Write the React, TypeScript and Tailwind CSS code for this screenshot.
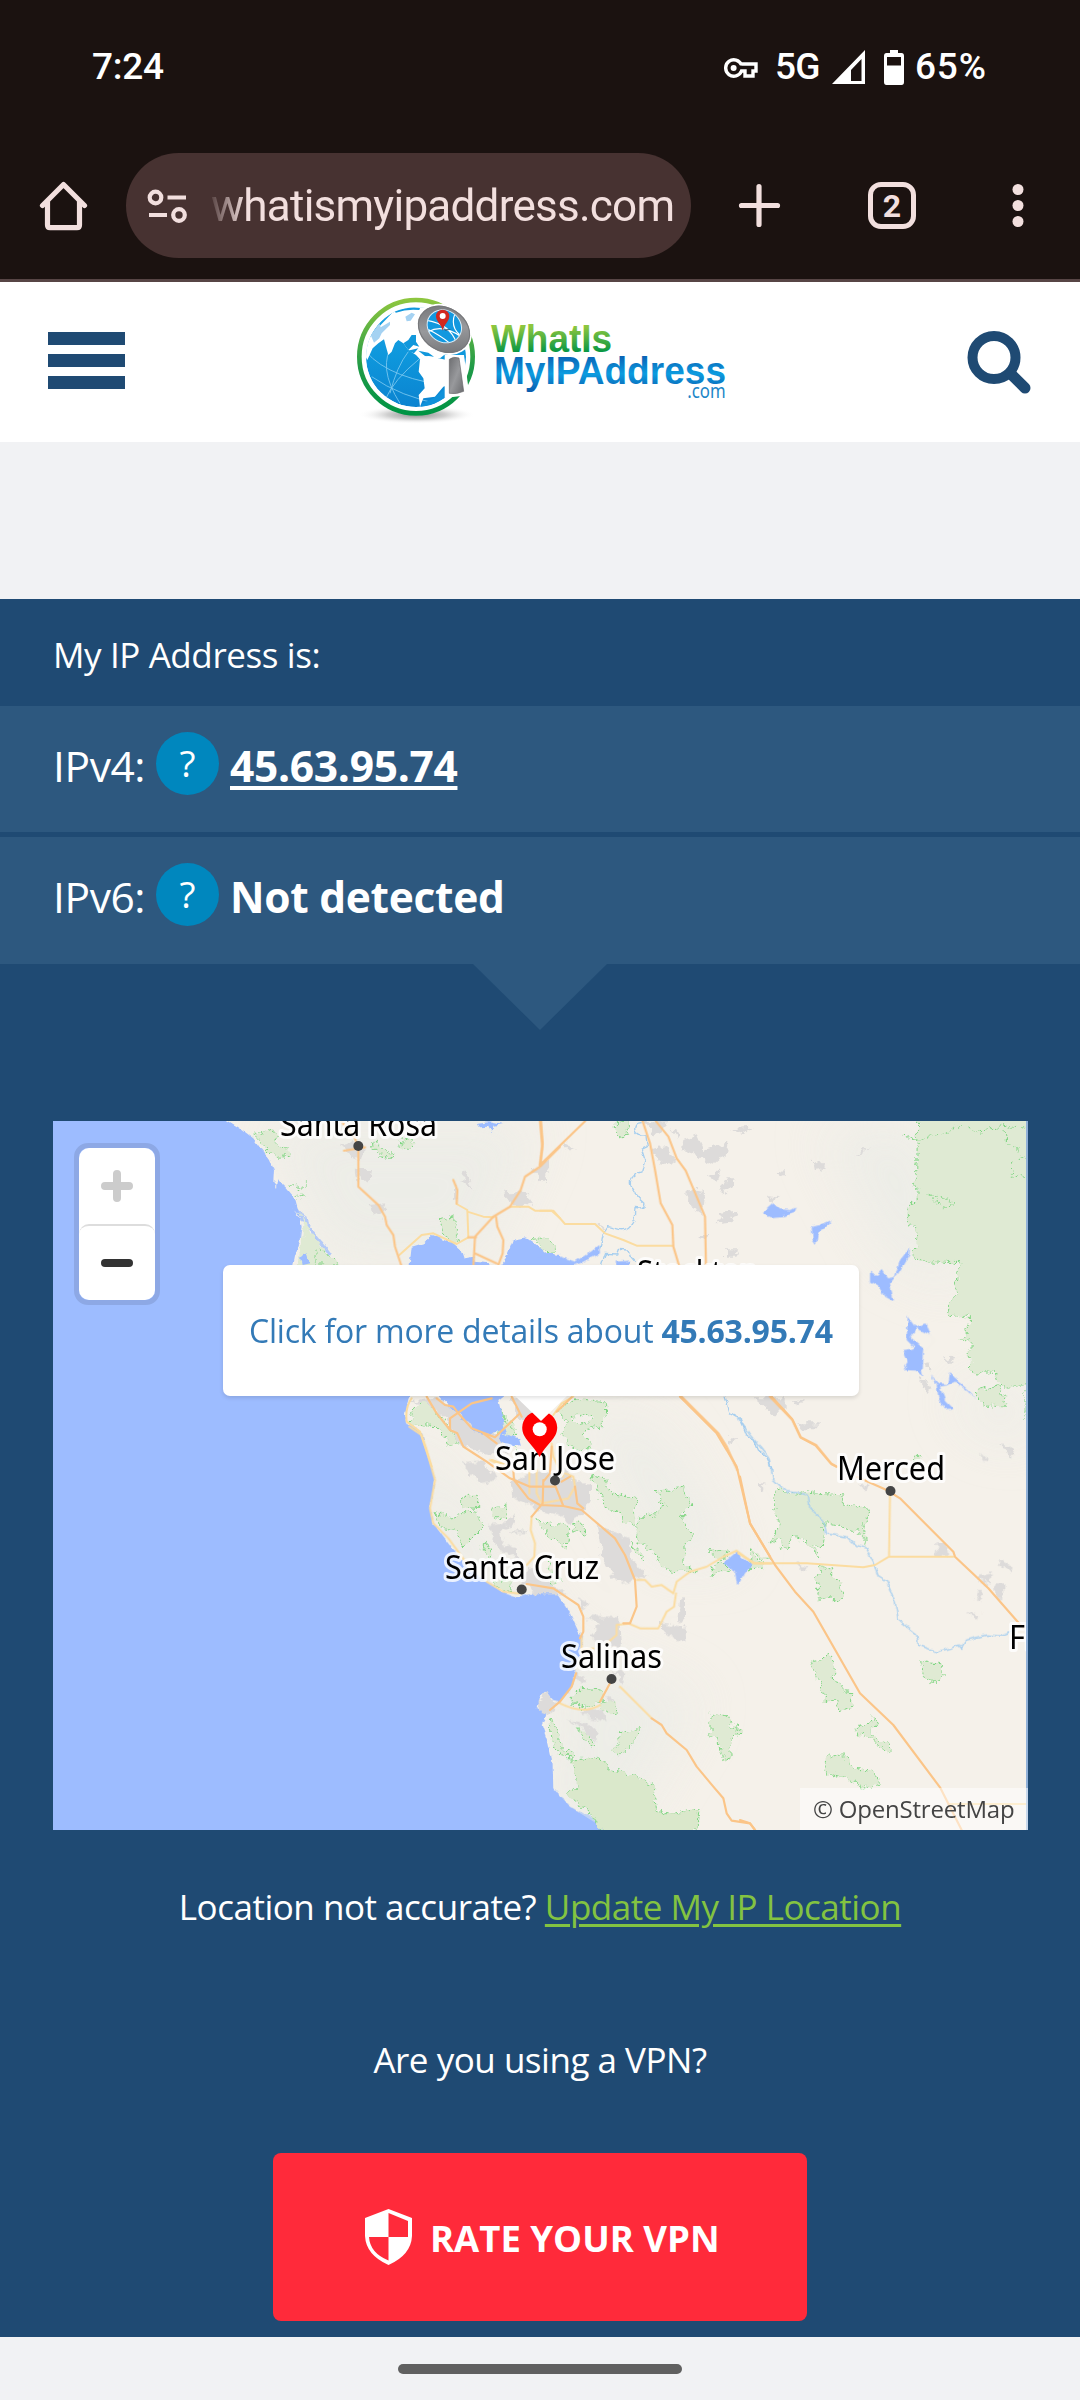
import React from "react";

function StatusBar() {
  return (
    <div className="flex h-[134px] items-center pl-[92px] font-['Roboto'] text-[37px] font-medium text-white">
      <span className="w-[632px] tracking-[-0.3px]">7:24</span>
      <svg className="mt-[1px] shrink-0" width="34" height="20" viewBox="0 0 34 20" fill="none" stroke="#fff" strokeWidth="3.4">
        <path d="M17.500 7A8.200 8.200 0 1 0 17.500 13H21V18H29V13H32V6H17.500Z" />
        <circle cx="9.600" cy="10" r="3" fill="#fff" stroke="none" />
      </svg>
      <span className="ml-[17px] w-[57px] tracking-[-0.8px]">5G</span>
      <svg className="shrink-0" width="33" height="34" viewBox="0 0 33 34">
        <path fill="#fff" fillRule="evenodd" d="M33 0V34H0ZM29.500 9L19 20V31H29.500Z" />
      </svg>
      <svg className="ml-[19px] shrink-0" width="20" height="35" viewBox="0 0 20 35">
        <path fill="#fff" fillRule="evenodd" d="M6 0H14V3H17.500Q20 3 20 6V32Q20 35 17.500 35H2.500Q0 35 0 32V6Q0 3 2.500 3H6ZM3 7V15.500H17V7Z" />
      </svg>
      <span className="ml-[11px] tracking-[0.8px]">65%</span>
    </div>
  );
}

function BrowserBar() {
  return (
    <div className="flex h-[148px] items-start border-b-[3px] border-[#574545] pt-[19px]">
      <svg className="ml-[39px] mt-[28px] shrink-0" width="49" height="51" viewBox="0 0 49 51" fill="none" stroke="#f2dfde" strokeWidth="5.200" strokeLinecap="round" strokeLinejoin="round">
        <path d="M3.500 24.500L24.500 3.500L45.500 24.500M8.500 20V44Q8.500 46.700 11 46.700H38Q40.500 46.700 40.500 44V20" />
      </svg>
      <div className="ml-[38px] flex h-[105px] w-[565px] shrink-0 items-center rounded-full bg-[#473231]">
        <svg className="ml-[21px] shrink-0" width="40" height="36" viewBox="0 0 40 36" fill="none" stroke="#f2dfde" strokeWidth="4.200">
          <circle cx="8.500" cy="9.500" r="5.800" />
          <circle cx="32" cy="27" r="5.800" />
          <path d="M20.500 9.500H39M2 27H20" />
        </svg>
        <div className="ml-[24px] whitespace-nowrap font-['Roboto'] text-[44px] leading-[60px] tracking-[-0.750px] text-[#f2dfde] [mask-image:linear-gradient(to_right,rgba(0,0,0,0.1),black_34px)]">
          whatismyipaddress.com
        </div>
      </div>
      <svg className="ml-[46px] mt-[29px] shrink-0" width="44" height="46" viewBox="0 0 44 46" stroke="#f2dfde" strokeWidth="5.200" strokeLinecap="round">
        <path d="M22 4.500V42.500M4.500 23.500H40.500" />
      </svg>
      <div className="ml-[87px] mt-[29px] flex h-[47px] w-[48px] shrink-0 items-center justify-center rounded-[13px] border-[5px] border-[#f2dfde] font-['Roboto'] text-[32px] font-bold leading-none text-[#f2dfde]">
        2
      </div>
      <svg className="ml-[96px] mt-[29px] shrink-0" width="12" height="46" viewBox="0 0 12 46" fill="#f2dfde">
        <circle cx="6" cy="7.500" r="5.500" />
        <circle cx="6" cy="23.500" r="5.500" />
        <circle cx="6" cy="39.500" r="5.500" />
      </svg>
    </div>
  );
}

function Logo() {
  return (
    <svg width="400" height="150" viewBox="0 15 1200 450">
      <defs>
        <linearGradient id="ring" x1="0" y1="0" x2="0" y2="1">
          <stop offset="0" stopColor="#8dc63f" />
          <stop offset="0.6" stopColor="#1f9a48" />
          <stop offset="1" stopColor="#009444" />
        </linearGradient>
        <linearGradient id="ocean" x1="0" y1="0" x2="0" y2="1">
          <stop offset="0" stopColor="#1ea4e4" />
          <stop offset="0.5" stopColor="#0e97dc" />
          <stop offset="1" stopColor="#0b83d0" />
        </linearGradient>
        <linearGradient id="steel" x1="0" y1="0" x2="1" y2="1">
          <stop offset="0" stopColor="#6d6e71" />
          <stop offset="0.5" stopColor="#98999c" />
          <stop offset="1" stopColor="#6a6b6e" />
        </linearGradient>
        <linearGradient id="greenText" gradientUnits="userSpaceOnUse" x1="0" y1="132" x2="0" y2="220">
          <stop offset="0.1" stopColor="#8dc63f" />
          <stop offset="1" stopColor="#009444" />
        </linearGradient>
        <linearGradient id="blueText" gradientUnits="userSpaceOnUse" x1="0" y1="228" x2="0" y2="335">
          <stop offset="0" stopColor="#0a62b4" />
          <stop offset="0.5" stopColor="#0c9ce0" />
          <stop offset="1" stopColor="#0a5cae" />
        </linearGradient>
        <radialGradient id="shade">
          <stop offset="0" stopColor="#8f8f8f" />
          <stop offset="0.5" stopColor="#cfcfcf" />
          <stop offset="1" stopColor="#fff" stopOpacity="0" />
        </radialGradient>
        <clipPath id="sphere"><circle cx="228" cy="231" r="150" /></clipPath>
        <clipPath id="lens"><ellipse cx="313" cy="139" rx="52" ry="46" transform="rotate(35 313 139)" /></clipPath>
      </defs>
      <ellipse cx="230" cy="404" rx="175" ry="28" fill="url(#shade)" />
      <circle cx="228" cy="230" r="176" fill="#fff" />
      <circle cx="228" cy="230" r="170" fill="none" stroke="url(#ring)" strokeWidth="14" />
      <g clipPath="url(#sphere)">
        <circle cx="228" cy="231" r="150" fill="url(#ocean)" />
        <g fill="none" stroke="#7fcaf0" strokeWidth="2.500">
          <path d="M78 215Q150 300 350 320M95 290Q180 350 310 375M160 190Q110 260 180 370M240 235Q160 300 135 360M205 215Q170 260 150 340" />
        </g>
        <path fill="#fff" d="M60 200L92 170L122 135L160 95L230 75L330 80L370 180L300 235L260 235L240 238L228 225L205 210L190 190L175 180L165 190L155 215L145 225L138 200L132 178L115 190L98 205L82 240Z" />
        <path fill="#1198dc" d="M190 190L205 180L215 165L228 165L228 185L238 200L220 195L205 210ZM203 212L235 205L222 220ZM235 212L265 218L282 230L255 228Z" />
        <path fill="#fff" d="M240 238L265 228L320 240L340 310L310 320L285 350L250 355L240 380L236 345L254 325L250 295L236 275Z" />
        <path fill="#1198dc" d="M162 94Q210 78 240 84L238 90Q200 86 168 98Z" />
        <path fill="#a5d2f2" d="M196 110L215 98L225 103L212 122L200 124ZM92 165L118 130L122 142L150 125L150 135L125 160L118 175L102 188Z" />
        <path fill="#1092da" d="M245 372L285 352L312 328L330 350L290 385L240 395Z" />
      </g>
      <path fill="#fff" d="M314 225H372L388 345L314 354Z" />
      <ellipse cx="312" cy="148" rx="88" ry="72" transform="rotate(32 312 148)" fill="#fff" />
      <ellipse cx="312" cy="148" rx="83" ry="66" transform="rotate(32 312 148)" fill="url(#steel)" />
      <ellipse cx="312" cy="148" rx="81" ry="64" transform="rotate(32 312 148)" fill="none" stroke="#77787b" strokeWidth="3" />
      <ellipse cx="313" cy="139" rx="55" ry="49" transform="rotate(35 313 139)" fill="#d8ecf8" />
      <g clipPath="url(#lens)">
        <rect x="250" y="80" width="130" height="120" fill="#1298df" />
        <path d="M255 120Q330 130 350 190M265 155Q310 130 370 175M345 100Q330 140 360 165M258 145Q300 165 330 190" fill="none" stroke="#fff" strokeWidth="3.500" />
      </g>
      <path d="M308 148H335L318 152Z" fill="#28506c" />
      <path d="M308 152C304 132 288 125 288 109A20 20 0 0 1 328 109C328 125 312 132 308 152Z" fill="#d2281f" />
      <circle cx="308" cy="108" r="9" fill="#fff" />
      <path fill="url(#steel)" stroke="#66676a" strokeWidth="2" d="M328 238Q340 228 357 234L371 334Q350 344 328 340Z" />
      <g fontFamily="Liberation Sans" fontWeight="bold" strokeLinejoin="round">
        <text x="453" y="216" fontSize="118" textLength="363" lengthAdjust="spacingAndGlyphs" fill="url(#greenText)">WhatIs</text>
        <text x="462" y="311" fontSize="116" textLength="696" lengthAdjust="spacingAndGlyphs" fill="url(#blueText)">MyIPAddress</text>
      </g>
      <text x="1042" y="354" fontSize="58" fontFamily="Noto Sans" textLength="115" lengthAdjust="spacingAndGlyphs" fill="#1b86c8">.com</text>
    </svg>
  );
}

function SiteHeader() {
  return (
    <header className="flex h-[160px] bg-white">
      <div className="ml-[48px] mt-[50px] flex w-[77px] flex-col gap-[9px]">
        <div className="h-[13px] bg-[#1f4a73]" />
        <div className="h-[13px] bg-[#1f4a73]" />
        <div className="h-[13px] bg-[#1f4a73]" />
      </div>
      <div className="ml-[215px] mt-[3px]">
        <Logo />
      </div>
      <svg className="ml-[227px] mt-[48px]" width="66" height="66" viewBox="0 0 66 66" fill="none" stroke="#1f4a73" strokeLinecap="round">
        <circle cx="27" cy="27.500" r="21.500" strokeWidth="10" />
        <path d="M44 44L58 58" strokeWidth="11" />
      </svg>
    </header>
  );
}

function IpRow({ label, children }: { label: string; children: React.ReactNode }) {
  return (
    <div className="flex h-[126px] items-center bg-[#2d587f] pb-[6px] pl-[53px] text-[42.500px] leading-[60px] text-white">
      <span className="w-[103px] tracking-[-0.400px]">{label}</span>
      <span className="mb-[6px] flex h-[63px] w-[63px] items-center justify-center rounded-full bg-[#0087be] text-[37px]">?</span>
      <span className="ml-[11px] font-bold tracking-[-0.300px]">{children}</span>
    </div>
  );
}

const CITIES = [
  { name: "Santa Rosa", x: 280, y: 1136, w: 157, dot: [358.300, 1146] },
  { name: "Stockton", x: 637, y: 1284, w: 121, dot: null },
  { name: "San Jose", x: 495, y: 1470, w: 120, dot: [555, 1480.500] },
  { name: "Santa Cruz", x: 445, y: 1579, w: 154, dot: [521.700, 1589.500] },
  { name: "Salinas", x: 561, y: 1668, w: 101, dot: [611.500, 1679] },
  { name: "Merced", x: 837, y: 1480, w: 108, dot: [890.500, 1491] },
  { name: "Fresno", x: 1009, y: 1649, w: 98, dot: null },
];

const NW = "translate(40 1110) scale(.33333)";
const NE = "translate(540 1110) scale(.33333)";
const SW = "translate(370 1380) scale(.33333)";
const SE = "translate(740 1380) scale(.33333)";

function MapTiles() {
  return (
    <svg className="block" width="975" height="709" viewBox="53 1121 975 709">
      <defs>
        <filter id="rough" filterUnits="userSpaceOnUse" x="40" y="1110" width="1000" height="730">
          <feTurbulence type="fractalNoise" baseFrequency="0.12" numOctaves="3" seed="4" result="n" />
          <feDisplacementMap in="SourceGraphic" in2="n" scale="11" xChannelSelector="R" yChannelSelector="G" />
        </filter>
        <filter id="coast" filterUnits="userSpaceOnUse" x="40" y="1110" width="1000" height="730">
          <feTurbulence type="fractalNoise" baseFrequency="0.15" numOctaves="2" seed="9" result="n" />
          <feDisplacementMap in="SourceGraphic" in2="n" scale="5" xChannelSelector="R" yChannelSelector="G" />
        </filter>
        <filter id="soft" filterUnits="userSpaceOnUse" x="40" y="1110" width="1000" height="730">
          <feGaussianBlur stdDeviation="26" />
        </filter>
        <clipPath id="landClip">
          <path transform={NW} d="M560 30L600 55L640 85L665 120L690 150L702 180L712 208L740 235L765 265L775 300L785 350L760 480H3000V0H560Z" />
          <path transform={SW} d="M125 40L105 100L108 130L155 155L170 210L195 300L180 385L190 430L235 490L290 560L350 605L400 635L440 650L495 640L525 622L560 640L600 700L628 760L632 830L605 925L545 990L525 1035L548 1150L550 1225L600 1280L710 1350H2000V40Z" />
          <path d="M600 1250H1040V1410H600Z" />
        </clipPath>
      </defs>
      <rect x="53" y="1121" width="975" height="709" fill="#9dbcff" />
      <g fill="#f5f1ea" filter="url(#coast)">
        <path transform={NW} d="M560 0V30L600 55L640 85L665 120L690 150L702 180L700 215L708 235L712 208L740 235L765 265L775 300L785 310L800 320L803 340L835 380L875 430L870 437L845 415L805 355L780 320L757 295L780 325L785 350L778 400L765 440L757 480H3200V0Z" />
        <path transform={SW} d="M125 40L105 100L108 130L155 155L170 210L195 300L180 385L190 430L235 490L290 560L350 605L400 635L440 650L495 640L525 622L560 640L600 700L628 760L640 765L632 800L630 830L615 880L605 925L570 965L550 960L525 933L505 965L500 985L530 995L525 1015L515 1035L535 1090L548 1150L550 1225L600 1280L660 1310L710 1350L730 1390H2200V40Z" />
        <path d="M600 1264H1060V1400H600Z" />
      </g>
      <g clipPath="url(#landClip)">
        <g fill="#e9ebe6" filter="url(#soft)" opacity=".7">
          <path d="M260 1121H540L480 1260H330Z" />
          <path d="M820 1130L920 1121L970 1290L890 1260Z" />
          <path d="M400 1420L470 1500L560 1640L700 1700L620 1830H540L560 1700L420 1540Z" />
          <path d="M570 1400L660 1430L740 1560L660 1560Z" />
          <path d="M950 1390H1030V1440L980 1430Z" />
        </g>
      </g>

      <g filter="url(#rough)">
        <g transform={NE} fill="#dfead3" stroke="#7dd581" strokeWidth="3" strokeDasharray="9 6">
          <path d="M1133 20H1500V828L1383 828L1370 790L1292 788L1290 690L1262 688L1285 660V615L1225 620L1222 585L1248 560L1250 490L1270 458L1133 455L1115 435L1130 410V348H1105V285L1132 280L1130 225L1115 222L1130 190Z" />
          <path fill="none" d="M1085 82L1150 88L1220 70L1270 42L1310 70L1380 48L1460 55M1395 60L1400 100L1430 110L1435 150L1460 140M1418 155L1417 205L1450 200M1172 250L1205 265L1245 272L1215 298L1175 262" />
          <path d="M1305 845L1370 825L1400 875L1390 890L1330 888Z" />
          <path fill="none" d="M1455 820V935" />
          <path d="M232 34H262V77H232ZM-5 385L45 400V430L5 422Z" />
          <path d="M50 900L110 865L200 880V900L185 950L130 960L155 1000L150 1020L95 1015L65 965L80 940ZM95 920L150 910L160 925L120 945Z" fillRule="evenodd" />
        </g>
        <g transform={NW} fill="#dfead3" stroke="#7dd581" strokeWidth="3" strokeDasharray="9 6">
          <path d="M645 75L685 55L710 70L700 90L745 120L750 135L720 145L680 120Z" />
          <path d="M1000 95L1050 125L1055 145L1025 142L1003 120ZM1080 95L1110 85L1125 100L1105 118L1080 112Z" />
          <path d="M750 232L798 222L770 240L795 262L770 265" fill="none" />
          <path stroke="none" d="M778 305L800 345L840 400L895 462V480H768L785 400L790 350Z" />
          <path d="M825 415L860 425L895 465H825Z" />
          <path d="M1205 325L1245 318L1245 360L1262 390L1240 402L1202 365ZM1475 380L1520 382L1548 405L1540 430L1510 425Z" />
          <path d="M1115 900L1155 870L1200 920L1240 970L1255 1005H1225L1195 950L1110 945ZM1380 905L1430 955L1410 960Z" />
        </g>
        <g transform={SW} fill="#dfead3" stroke="#7dd581" strokeWidth="3" strokeDasharray="9 6">
          <path d="M390 90L410 130L440 160L420 180L450 215L390 160Z" />
          <path d="M275 360L300 345L320 350V385L275 382ZM365 385L405 378L410 420L375 415ZM195 398L250 415L285 400L320 395L340 440L280 500L260 450L210 440ZM340 490L365 505L360 535L340 520Z" />
          <path d="M500 425L565 435L600 440L590 510L560 480L510 440ZM610 430L645 435L648 470L615 455Z" />
          <path d="M665 285L710 300L720 340L800 355L795 435L760 425L745 390L705 385L680 320Z" />
          <path d="M855 335L940 325L960 375L935 400L950 450L970 460L945 500L945 550L980 575L885 570L860 525L810 490L800 440L820 405L870 400L885 370Z" />
          <path d="M785 490L810 515L830 540L795 520ZM1018 512H1075L1055 545L1080 570L1020 585L1045 545ZM1140 505L1180 540L1200 535" />
          <path d="M605 950L640 925L695 930L700 960L650 985L610 978ZM700 965L740 970L735 1000L695 985Z" />
          <path d="M535 1020L555 1030L570 1080L575 1110L610 1125V1135L570 1130L548 1085ZM620 1045L655 1060L675 1100L655 1095ZM745 1055L805 1045L800 1080L745 1130L725 1115L748 1085Z" />
          <path fill="#dae8cb" d="M605 1140L690 1135L720 1165L790 1185L850 1220L860 1295H990L985 1325L970 1370H700L670 1310L590 1240L625 1220Z" />
          <path d="M1020 1010L1040 998L1075 1010L1085 1035L1118 1050L1080 1085L1080 1130L1060 1135L1045 1075L1020 1060Z" />
          <path d="M375 605L430 600L420 635L395 625ZM535 545L545 610L575 600" />
        </g>
        <g transform={SE} fill="#dfead3" stroke="#7dd581" strokeWidth="3" strokeDasharray="9 6">
          <path d="M115 320L150 345L190 335L240 340L310 345V375L385 385V420L370 440L380 490L350 450L300 440L255 430L250 500L225 490L240 540L210 490L150 470L145 510L125 500L120 475L90 490L115 440L100 360Z" />
          <path d="M245 560L275 565L275 590L308 605L303 663L235 650L228 590ZM35 505L50 540L70 545L65 560L30 570Z" />
          <path d="M208 850L235 845L260 825L280 840L285 890L310 930L335 940V985L300 998L285 965L255 960L240 910Z" />
          <path d="M352 1040L385 1030L400 1012L415 1030L395 1060L455 1110L440 1118L395 1075L352 1062ZM545 842L612 858V890L580 908L550 890ZM260 1125L320 1132L345 1165L400 1175L418 1208L390 1230L330 1200L258 1180ZM518 230L540 225L545 245H518ZM-10 1040L8 1050L0 1075Z" />
        </g>
        <g transform={NE} fill="#dddbda">
          <path d="M310 34H385L345 80ZM340 120L385 108L405 140L400 165L360 160ZM430 90L470 75L490 120L565 95L560 140L500 165L470 135L425 120ZM570 55L635 50L610 70ZM500 200L545 178L530 215ZM540 245L560 205L590 205L580 230ZM440 240L495 245L490 310L460 290L438 280ZM530 340L550 310L590 305L570 335ZM815 145L855 160L850 192L822 180ZM950 138L980 112L975 130ZM555 418H595L580 440H555ZM470 375L510 375L495 385ZM70 95L110 115L75 115ZM390 55L420 70L415 85ZM685 258L718 262L700 272ZM710 190L735 180L730 200ZM640 862H740V890L710 925L685 900ZM760 870L790 875L760 895ZM775 940H830V955H780ZM1135 805L1175 825L1165 850ZM1150 765L1175 760L1170 775ZM1215 735L1245 755H1225ZM565 985L585 990L575 1005ZM1385 1000L1420 1020L1410 1040ZM160 335L185 345L200 362Z" />
          <path d="M0 150L25 160L0 215Z" />
        </g>
        <g transform={NW} fill="#dddbda">
          <path d="M900 105L940 95L975 110L965 150L930 135ZM950 180L990 180L985 215L955 215ZM990 285L1045 280L1020 320L995 305ZM1245 215L1255 260L1245 270ZM1275 180L1290 210L1300 245L1265 215ZM1395 245L1465 250L1480 290L1410 285ZM1480 185L1530 150L1515 220Z" />
          <path d="M1105 875L1160 865L1200 865L1290 925L1380 975L1400 1030L1350 1030L1260 1010L1220 930L1160 880ZM1410 865L1440 860L1500 920V980L1440 930Z" />
        </g>
        <g transform={SW} fill="#dddbda">
          <path d="M270 250L340 245L380 300L330 310L290 265ZM425 300L480 280L600 270L620 310H660V360L640 400L600 430L560 400L510 390L430 355ZM355 435L410 430L435 400L430 430L390 455L405 495L440 505L450 540L390 510ZM420 455H470V460H420ZM680 430L775 475L785 540L835 590L750 610L700 550ZM480 560L530 600L590 640L500 640L450 610ZM620 655L665 670L640 690ZM650 705L750 712L755 790L700 800L660 765L690 735ZM720 770L755 780L745 810ZM870 730L945 740L950 785L910 775L870 750ZM930 655H945V720L925 725ZM620 870L650 910L610 900ZM735 870L770 880L750 915ZM525 935L560 965L555 1000L500 985ZM630 995L700 985L710 1020L645 1010ZM590 1020L650 1030L680 1060L675 1085L640 1045ZM1165 310L1190 315L1175 335ZM1075 175L1095 180L1080 195ZM705 945L740 965L720 970Z" />
        </g>
        <g transform={SE} fill="#dddbda">
          <path d="M590 490L620 490L625 525L585 525ZM780 540L815 555L810 575L780 560ZM715 590L755 580L750 610L720 605ZM765 610H790V660H770ZM715 630L735 650L705 665ZM680 695L720 705L710 720ZM165 545L205 560L185 570ZM55 310H80L65 335ZM355 310L390 320L380 335ZM720 215L740 235L730 245ZM785 190L818 215L810 230Z" />
        </g>
      </g>

      <g fill="#9dbcff" filter="url(#coast)">
        <g transform={NW}>
          <path d="M1108 475L1115 410L1150 400L1175 375L1240 400L1268 425L1275 445L1300 440L1300 455L1350 460L1370 475ZM1375 475L1400 440L1418 392L1460 385L1490 405L1520 430L1560 435V475Z" />
          <path d="M1310 38L1350 34L1390 42L1360 48L1355 70L1345 50L1320 52ZM780 440L800 430L808 460L785 465Z" />
          <path d="M1190 850L1240 900L1265 912L1260 928L1290 940L1300 965L1350 975L1370 960L1400 980L1375 870L1400 850ZM1380 970L1440 985L1445 1005L1400 1010L1375 985Z" />
        </g>
        <g transform={NE}>
          <path d="M-5 440L30 435L40 455L60 440L105 455L145 430L178 405L180 430L120 460L90 470H-5ZM230 455L270 452L265 470H232ZM665 310L700 280L720 298L750 300L770 290L765 305L735 318L690 322ZM815 350L840 345L875 330L860 350L835 365L828 405L818 390ZM990 485L1010 495L1025 480L1045 505L1065 500L1080 450L1110 412L1108 435L1075 490L1050 520L1062 575L1035 560L1015 530L990 515ZM1103 620L1125 650L1160 640L1172 675L1130 655L1112 682L1150 715L1145 775L1150 800L1125 782L1090 780L1105 755L1090 720L1125 715L1100 690ZM1170 795L1195 820L1225 822L1230 785L1240 802L1285 840L1310 865L1245 815L1225 825L1200 830L1215 870L1240 895L1215 898L1195 865L1190 825Z" />
        </g>
        <path transform={SW} d="M1065 545L1100 515L1115 530L1145 555L1125 580L1102 618L1095 580L1085 565L1060 550Z" />
      </g>

      <g fill="none" stroke="#a6ceef" strokeWidth="4" strokeLinejoin="round" filter="url(#coast)">
        <path transform={NE} d="M305 38Q280 38 285 65Q290 80 318 78L322 110L305 118L315 150L305 185Q265 200 272 225Q280 250 315 280Q315 298 285 292L282 330Q265 365 235 358L205 350L190 370L180 415M185 465L197 430L230 432L235 418L265 420L272 440L285 455M555 860L570 908L600 925L620 975L645 995L655 1020L680 1040L700 1085" />
        <path transform={SE} d="M-5 115L30 165L60 200L85 230L100 298L140 335L185 340L205 345L210 385L250 420L260 462L320 470L345 495L380 505L400 545L415 590L440 605L465 665L475 720L530 765L535 795L590 815L635 805L655 795L665 805L680 780L740 765L785 768L830 750" />
      </g>

      <g fill="none" stroke="#fbdca0" strokeWidth="6" strokeLinejoin="round" strokeLinecap="round">
        <path transform={NW} d="M1078 435L1145 375L1180 370L1250 402L1285 382M1250 282L1282 300L1285 380M1282 305L1330 320L1360 322M1410 290H1465L1485 302H1535L1560 325M1115 865Q1095 890 1100 935L1140 965L1155 1010L1175 1070M1355 1050L1400 1065" />
        <path transform={NE} d="M0 302H40L75 342H165L195 370L250 390L290 407H398M40 915L65 880L100 860" />
        <path transform={SW} d="M118 140L155 165L170 210L195 300L180 385L190 430L235 475L290 550M350 605L400 635L445 640M485 410L482 450L495 490L493 530L470 555M500 270V340L515 370L595 355L615 320L610 290L585 280M478 270V340M545 190L550 230L580 290M360 240L410 265M800 600L825 600L845 620L875 615L910 640L920 605L960 575L1010 560L1060 530L1100 512L1150 550H1205M918 640L912 680L890 695L865 745H810L780 732M780 730L740 735L740 765L710 790M570 970Q640 1005 690 975M635 770V810L670 805M750 920L845 1015" />
        <path transform={SE} d="M-5 520L45 550H200L370 562L405 555L447 530H640M450 345L447 530M625 1272H860" />
      </g>
      <g fill="none" stroke="#fbc588" strokeWidth="6.500" strokeLinejoin="round" strokeLinecap="round">
        <path transform={NW} d="M905 35L945 85L955 115V230L1015 285L1035 320L1040 345L1060 375L1065 410L1085 470M912 122L975 112M1240 210L1252 240L1250 280M1500 33L1507 110L1500 170M1560 110L1500 170L1455 200L1442 240L1410 290L1360 320L1305 380L1300 470M1285 382H1308M1368 320L1372 350L1390 390L1388 430L1375 465M1305 430L1370 460" />
        <path transform={NE} d="M0 165L135 34M3 34L8 100L0 165M308 34L330 100L345 180L362 280L397 345L400 410L418 470M348 34L385 80L410 145L437 182L495 320L498 470M425 860L535 970L560 1010L592 1080M690 860L757 930L782 982L828 1005L873 1060L890 1070" />
        <path transform={SW} d="M170 50L200 100L240 150L262 160L280 200L350 245L420 295L480 320H555M200 55L225 75L250 80L265 100L305 145L375 172L450 100M365 55L305 70L240 115V150M425 50L455 110M340 160L380 190M430 270L432 300L475 355L510 375L580 378L635 390L735 475L765 525L795 600L800 680L780 730H760M520 300L518 370L485 410M555 315L580 378M615 320L622 370L640 385M545 200L540 280L520 305M575 305L600 290M470 612L550 625L595 655L625 675L640 710V755L630 775M540 990L570 965L605 920L618 880M720 910L690 965M605 52L560 95M930 50L1040 160L1100 260L1140 430L1200 530M845 1015L875 1035L890 1060L950 1110L980 1160L1030 1220L1060 1255L1070 1300L1085 1322L1140 1330L1155 1350" />
        <path transform={SE} d="M0 290L30 430L105 555L165 635L220 695L360 940L460 1035L600 1222L665 1350M350 290L440 330L480 355L595 470L640 515L645 530L745 625L850 745M0 1320L30 1330L45 1350M95 50L157 118L182 173L227 197L275 253L290 260" />
      </g>

      <g fontFamily="Noto Sans" fontSize="32">
        {CITIES.map((c) => (
          <g key={c.name}>
            <text x={c.x} y={c.y} textLength={c.w} lengthAdjust="spacingAndGlyphs" fill="#000" stroke="#fff" strokeOpacity=".8" strokeWidth="6" strokeLinejoin="round" paintOrder="stroke">{c.name}</text>
            {c.dot && <circle cx={c.dot[0]} cy={c.dot[1]} r="5" fill="#444" />}
          </g>
        ))}
      </g>
      <rect x="1026" y="1121" width="2" height="709" fill="#8fb0d8" />
      <path d="M539.700 1457C533 1444 522.200 1439 522.200 1427.500A17.500 16.500 0 0 1 557.200 1427.500C557.200 1439 546 1444 539.700 1457Z" fill="#f00" />
      <path d="M514 1395H568L541 1421Z" fill="#fff" />
      <circle cx="539.700" cy="1429.200" r="7" fill="#fff" />
    </svg>
  );
}

function MapPanel() {
  return (
    <div className="relative ml-[53px] mt-[157px] h-[709px] w-[975px] overflow-hidden">
      <MapTiles />
      <div className="absolute left-[21px] top-[22px] h-[162px] w-[86px] rounded-[14px] border-[5px] border-black/10 bg-clip-padding">
        <div className="flex h-full flex-col overflow-hidden rounded-[10px] bg-white">
          <div className="flex h-[76px] items-center justify-center">
            <svg width="32" height="32" viewBox="0 0 32 32" stroke="#ccc" strokeWidth="8" strokeLinecap="round"><path d="M16 4V28M4 16H28" /></svg>
          </div>
          <div className="flex flex-1 items-center justify-center rounded-t-[10px] border-t-2 border-[#ddd]">
            <svg width="32" height="10" viewBox="0 0 32 10" stroke="#333" strokeWidth="8" strokeLinecap="round"><path d="M4 5H28" /></svg>
          </div>
        </div>
      </div>
      <div className="absolute left-[170px] top-[144px] flex h-[131px] w-[636px] items-center whitespace-nowrap rounded-[7px] bg-white pl-[26px] text-[32px] tracking-[-0.220px] text-[#337ab7] shadow-[0_2px_4px_rgba(0,0,0,0.12)]">
        <span>Click for more details about <b>45.63.95.74</b></span>
      </div>
      <div className="absolute bottom-0 right-0 flex h-[42px] w-[228px] items-center whitespace-nowrap bg-white/50 pl-[13px] text-[24px] tracking-[-0.200px] text-[#444]">
        © OpenStreetMap
      </div>
    </div>
  );
}

export default function App() {
  return (
    <div className="flex h-[2400px] w-[1080px] flex-col overflow-hidden bg-[#f1f2f4] font-['Open_Sans',sans-serif]">
      <div className="bg-[#1b1210]">
        <StatusBar />
        <BrowserBar />
      </div>
      <SiteHeader />
      <main className="mt-[157px] h-[1738px] bg-[#1f4a73] text-white">
        <div className="flex h-[107px] items-center pl-[53px] pt-[5px] text-[35px] tracking-[-0.400px]">My IP Address is:</div>
        <IpRow label="IPv4:">
          <a className="underline decoration-[4px] underline-offset-[4px] [text-decoration-skip-ink:none]">45.63.95.74</a>
        </IpRow>
        <div className="h-[5px]" />
        <div className="relative bg-[#2d587f] pb-[1px]">
          <IpRow label="IPv6:">Not detected</IpRow>
          <div className="absolute left-[473px] top-[127px] h-[66px] w-[134px] bg-[#2d587f] [clip-path:polygon(0_0,100%_0,50%_100%)]" />
        </div>
        <MapPanel />
        <div className="mt-[49px] whitespace-nowrap text-center text-[35px] leading-[56px] tracking-[-0.480px]">
          Location not accurate? <a className="text-[#83c341] underline decoration-[3px] underline-offset-[4px]">Update My IP Location</a>
        </div>
        <div className="mt-[97px] text-center text-[35px] leading-[56px] tracking-[-0.480px]">Are you using a VPN?</div>
        <button className="mx-auto mt-[65px] flex h-[168px] w-[534px] items-center whitespace-nowrap rounded-[8px] bg-[#ff2a3a] pl-[92px] text-[36.500px] font-bold text-white">
          <svg width="47" height="56" viewBox="0 0 47 56">
            <path fill="#fff" fillRule="evenodd" d="M23.500 0L47 9V27Q46 46 23.500 56Q1 46 0 27V9ZM23.500 4V28H43V12ZM23.500 28H4Q5 44 23.500 51.500Z" />
          </svg>
          <span className="ml-[18px] pt-[2px]">RATE YOUR VPN</span>
        </button>
      </main>
      <div className="mx-auto mt-[27px] h-[10px] w-[284px] rounded-full bg-[#606060]" />
    </div>
  );
}
